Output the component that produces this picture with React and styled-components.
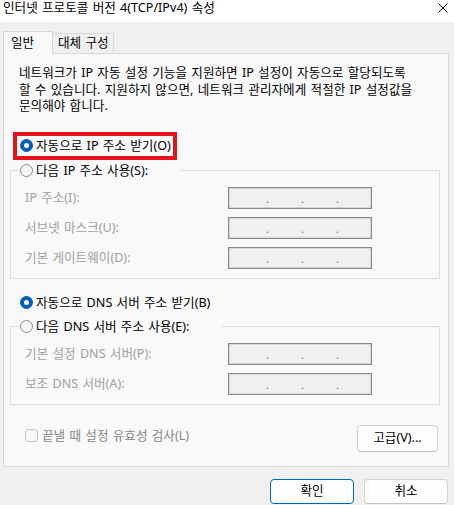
import React from 'react';
import styled, { createGlobalStyle } from 'styled-components';

const GlobalStyle = createGlobalStyle`
  html, body {
    margin: 0;
    padding: 0;
    background: #f0f0f0;
  }
  body {
    font-family: "Noto Sans", "Noto Sans CJK KR", sans-serif;
    font-size: 12.6px;
    word-spacing: 1px;
    color: #000;
  }
  * {
    box-sizing: border-box;
  }
`;

const Dialog = styled.div`
  width: 454px;
  height: 505px;
  overflow: hidden;
  background: #f0f0f0;
  display: flex;
  flex-direction: column;
`;

const TitleBar = styled.div`
  height: 22px;
  background: #fff;
  display: flex;
  justify-content: space-between;
  align-items: flex-start;
  padding: 0 6px 0 3px;
`;

const Title = styled.span`
  line-height: 16px;
`;

const CloseIcon = styled.svg`
  margin-top: 3px;
`;

const Body = styled.div`
  padding: 9px 5px 0 3px;
`;

const TabList = styled.div`
  display: flex;
  align-items: flex-end;
  height: 22px;
`;

const Tab = styled.div`
  position: relative;
  z-index: ${p => (p.$active ? 1 : 0)};
  width: ${p => p.$width}px;
  height: ${p => (p.$active ? 23 : 20)}px;
  margin-bottom: ${p => (p.$active ? -1 : 0)}px;
  padding: ${p => (p.$active ? '3px 0 0 7px' : '1px 0 0 5px')};
  background: ${p => (p.$active ? '#f9f9f9' : '#f0f0f0')};
  border: 1px solid #d9d9d9;
  border-bottom: none;
  border-left: ${p => (p.$active ? '1px solid #d9d9d9' : 'none')};
  line-height: 16px;
  white-space: nowrap;
`;

const Panel = styled.div`
  background: #f9f9f9;
  border: 1px solid #d9d9d9;
  padding: 11px 8px 14px 6px;
`;

const Intro = styled.p`
  margin: 0 0 0 9px;
  line-height: 16.5px;
  white-space: nowrap;
`;

const Highlight = styled.div`
  display: flex;
  align-items: center;
  width: fit-content;
  height: 28px;
  margin: 17px 0 0 3px;
  padding: 0 2px 0 3px;
  border: 4px solid #e3121d;
`;

const OptionLabel = styled.label`
  display: flex;
  align-items: center;
  gap: 3px;
  line-height: 16px;
  white-space: nowrap;
  margin: ${p => p.$margin || '0'};
`;

const RadioDot = styled.span`
  width: 13px;
  height: 13px;
  border-radius: 50%;
  flex: none;
  display: flex;
  align-items: center;
  justify-content: center;
  background: ${p => (p.$checked ? '#005fb8' : '#f6f6f6')};
  border: 1px solid ${p => (p.$checked ? '#005fb8' : '#8a8a8a')};

  &::after {
    content: '';
    display: ${p => (p.$checked ? 'block' : 'none')};
    width: 5px;
    height: 5px;
    border-radius: 50%;
    background: #fff;
  }
`;

const Group = styled.fieldset`
  margin: ${p => p.$top}px 0 0 0;
  min-width: 0;
  border: 1px solid #dcdcdc;
  padding: 8px 0 9px 14px;
`;

const Legend = styled.legend`
  margin-left: -5px;
  padding: 0 33px 0 0;
`;

const FieldGrid = styled.div`
  display: grid;
  grid-template-columns: 203px 144px;
  row-gap: 8px;
  align-items: center;
`;

const FieldLabel = styled.span`
  color: #a0a0a0;
  line-height: 16px;
  white-space: nowrap;
`;

const IpBox = styled.div`
  height: 22px;
  background: #f0f0f0;
  border: 1px solid #8a8a8a;
  box-shadow: inset 0 0 0 1px #d6d6d6;
  display: flex;
  align-items: center;
  gap: 32px;
  padding: 3px 0 0 37px;
`;

const IpDot = styled.span`
  width: 3px;
  font-size: 11px;
  line-height: 14px;
  color: #6e6e6e;
`;

const BottomRow = styled.div`
  display: flex;
  justify-content: space-between;
  align-items: flex-start;
  margin-top: 20px;
  padding: 0 2px 0 15px;
`;

const CheckLabel = styled.label`
  display: flex;
  align-items: center;
  gap: 4px;
  margin-top: 3px;
  line-height: 16px;
  color: #868686;
  white-space: nowrap;
`;

const CheckBox = styled.span`
  width: 13px;
  height: 13px;
  border: 1px solid #c6c6c6;
  border-radius: 3px;
  background: #f7f7f7;
`;

const PushButton = styled.button`
  width: ${p => p.$width}px;
  height: ${p => p.$height}px;
  padding: 0;
  font: inherit;
  word-spacing: inherit;
  color: #000;
  background: #fdfdfd;
  border: 1px solid ${p => (p.$primary ? '#0067c0' : '#d3d3d3')};
  border-bottom-color: ${p => (p.$primary ? '#0067c0' : '#c2c2c2')};
  border-radius: 4px;
  line-height: 16px;
`;

const Footer = styled.div`
  display: flex;
  justify-content: flex-end;
  gap: 10px;
  padding: 12px 1px 0 0;
`;

function Radio({ checked, children, ...rest }) {
  return (
    <OptionLabel {...rest}>
      <RadioDot $checked={checked} />
      <span>{children}</span>
    </OptionLabel>
  );
}

function IpField() {
  return (
    <IpBox>
      <IpDot>.</IpDot>
      <IpDot>.</IpDot>
      <IpDot>.</IpDot>
    </IpBox>
  );
}

const ipRows = ['IP 주소(I):', '서브넷 마스크(U):', '기본 게이트웨이(D):'];
const dnsRows = ['기본 설정 DNS 서버(P):', '보조 DNS 서버(A):'];

export default function App() {
  return (
    <Dialog>
      <GlobalStyle />
      <TitleBar>
        <Title>인터넷 프로토콜 버전 4(TCP/IPv4) 속성</Title>
        <CloseIcon width="10" height="10" viewBox="0 0 10 10">
          <path d="M0.5 0.5 L9.5 9.5 M9.5 0.5 L0.5 9.5" stroke="#111" strokeWidth="1" fill="none" />
        </CloseIcon>
      </TitleBar>
      <Body>
        <TabList>
          <Tab $active $width={50}>일반</Tab>
          <Tab $width={61}>대체 구성</Tab>
        </TabList>
        <Panel>
          <Intro>
            네트워크가 IP 자동 설정 기능을 지원하면 IP 설정이 자동으로 할당되도록
            <br />
            할 수 있습니다. 지원하지 않으면, 네트워크 관리자에게 적절한 IP 설정값을
            <br />
            문의해야 합니다.
          </Intro>

          <Highlight>
            <Radio checked>자동으로 IP 주소 받기(O)</Radio>
          </Highlight>

          <Group $top={3}>
            <Legend>
              <Radio>다음 IP 주소 사용(S):</Radio>
            </Legend>
            <FieldGrid>
              {ipRows.map(label => (
                <React.Fragment key={label}>
                  <FieldLabel>{label}</FieldLabel>
                  <IpField />
                </React.Fragment>
              ))}
            </FieldGrid>
          </Group>

          <Radio checked $margin="16px 0 0 10px">자동으로 DNS 서버 주소 받기(B)</Radio>

          <Group $top={8}>
            <Legend>
              <Radio>다음 DNS 서버 주소 사용(E):</Radio>
            </Legend>
            <FieldGrid>
              {dnsRows.map(label => (
                <React.Fragment key={label}>
                  <FieldLabel>{label}</FieldLabel>
                  <IpField />
                </React.Fragment>
              ))}
            </FieldGrid>
          </Group>

          <BottomRow>
            <CheckLabel>
              <CheckBox />
              끝낼 때 설정 유효성 검사(L)
            </CheckLabel>
            <PushButton $width={81} $height={27}>고급(V)...</PushButton>
          </BottomRow>
        </Panel>
        <Footer>
          <PushButton $primary $width={84} $height={25}>확인</PushButton>
          <PushButton $width={84} $height={25}>취소</PushButton>
        </Footer>
      </Body>
    </Dialog>
  );
}
